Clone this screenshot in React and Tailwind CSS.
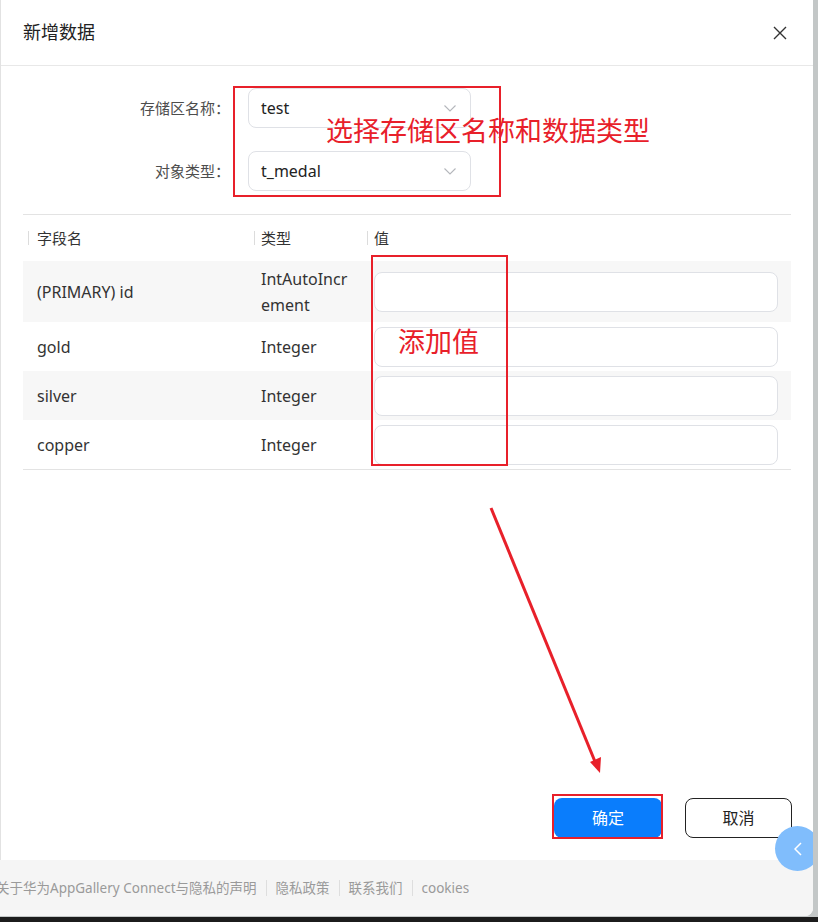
import { useState } from "react"

const font = { fontFamily: '"Noto Sans", "Noto Sans CJK SC", sans-serif' }

const rows = [
    { name: "(PRIMARY) id", type: "IntAutoIncrement", gray: true },
    { name: "gold", type: "Integer", gray: false },
    { name: "silver", type: "Integer", gray: true },
    { name: "copper", type: "Integer", gray: false },
]

function Chevron() {
    return (
        <svg width="12" height="7" viewBox="0 0 12 7" fill="none">
            <polyline points="0.5,0.5 6,6 11.5,0.5" stroke="#b4b6bb" strokeWidth="1.1" />
        </svg>
    )
}

function SelectBox({ value }) {
    return (
        <div className="flex h-10 w-[223px] items-center justify-between rounded-lg border border-[#dfe1e6] bg-white pl-[12px] pr-[14px]">
            <span className="text-[16px] text-[#222]">{value}</span>
            <Chevron />
        </div>
    )
}

function HeaderCell({ label, sep }) {
    return (
        <div className="flex items-center">
            <span className={`h-[14px] w-px bg-[#dcdcdc] ${sep}`} />
            <span className="text-[15px] text-[#333]">{label}</span>
        </div>
    )
}

export default function App() {
    const [values, setValues] = useState(["", "", "", ""])

    return (
        <div className="flex h-[922px] w-[818px] flex-col bg-[#1c1c1c]" style={font}>
            <div className="flex h-[917px] bg-[#c3c7c7]">
                <div className="relative flex h-[916px] w-[813px] flex-col overflow-hidden rounded-br-[8px] bg-white">
                    <div className="flex flex-1 flex-col border-l border-[#e2e2e2]">
                        {/* header */}
                        <div className="flex h-[66px] shrink-0 items-center justify-between border-b border-[#e8e8e8] pl-[22px] pr-[26px]">
                            <h1 className="text-[18px] text-[#222]">新增数据</h1>
                            <svg width="14" height="14" viewBox="0 0 14 14">
                                <path d="M1 1 L13 13 M13 1 L1 13" stroke="#333" strokeWidth="1.4" />
                            </svg>
                        </div>

                        {/* form */}
                        <div className="flex flex-col gap-[23px] pt-[22px]">
                            <div className="flex items-center gap-[18px]">
                                <label className="w-[229px] text-right text-[15px] text-[#4d4d4d]">存储区名称：</label>
                                <SelectBox value="test" />
                            </div>
                            <div className="flex items-center gap-[18px]">
                                <label className="w-[229px] text-right text-[15px] text-[#4d4d4d]">对象类型：</label>
                                <SelectBox value="t_medal" />
                            </div>
                        </div>

                        <div className="mx-[22px] mt-[23px] h-px bg-[#e3e3e3]" />

                        {/* table */}
                        <div className="mx-[22px] border-b border-[#e3e3e3]">
                            <div className="grid h-[46px] grid-cols-[231px_113px_1fr]">
                                <HeaderCell label="字段名" sep="ml-[5px] mr-[8px]" />
                                <HeaderCell label="类型" sep="mr-[6px]" />
                                <HeaderCell label="值" sep="mr-[6px]" />
                            </div>
                            {rows.map((row, i) => (
                                <div
                                    key={row.name}
                                    className={`grid grid-cols-[231px_113px_1fr] items-center py-[4.5px] text-[16px] leading-[26px] text-[#333] ${row.gray ? "bg-[#f7f7f7]" : "bg-white"}`}
                                >
                                    <div className="pl-[14px]">{row.name}</div>
                                    <div className="break-all pl-[7px] pr-[16px]">{row.type}</div>
                                    <div className="pl-[7px] pr-[13px]">
                                        <input
                                            className="h-10 w-full rounded-lg border border-[#dfe1e6] bg-white px-3 outline-none"
                                            value={values[i]}
                                            onChange={(e) => {
                                                const next = [...values]
                                                next[i] = e.target.value
                                                setValues(next)
                                            }}
                                        />
                                    </div>
                                </div>
                            ))}
                        </div>

                        {/* actions */}
                        <div className="flex flex-1 items-end justify-end gap-[23px] pb-[22px] pr-[21px]">
                            <button className="h-10 w-[108px] rounded-lg bg-[#0a7dfc] text-[16px] text-white">确定</button>
                            <button className="h-10 w-[107px] rounded-lg border border-[#222] bg-white text-[16px] text-[#222]">取消</button>
                        </div>
                    </div>

                    {/* footer */}
                    <div className="flex h-[56px] shrink-0 items-center bg-[#f5f5f5] text-[13.5px] text-[#9a9a9a]">
                        <span className="ml-[-4px] whitespace-nowrap">关于华为AppGallery Connect与隐私的声明</span>
                        <span className="mx-[9px] h-[16px] w-px bg-[#dedede]" />
                        <span>隐私政策</span>
                        <span className="mx-[9px] h-[16px] w-px bg-[#dedede]" />
                        <span>联系我们</span>
                        <span className="mx-[9px] h-[16px] w-px bg-[#dedede]" />
                        <span>cookies</span>
                    </div>

                    {/* floating side button */}
                    <div className="absolute left-[775px] top-[826px] flex h-[45px] w-[45px] items-center rounded-full bg-[#80bdfc] pl-[19px]">
                        <svg width="8" height="14" viewBox="0 0 8 14" fill="none">
                            <polyline points="7,1 1,7 7,13" stroke="white" strokeWidth="1.5" />
                        </svg>
                    </div>

                    {/* annotations */}
                    <div className="pointer-events-none absolute left-[233px] top-[86px] h-[111px] w-[268px] border-2 border-[#e8202a]" />
                    <span className="pointer-events-none absolute left-[326px] top-[112px] text-[27px] leading-[38px] text-[#e8202a]">选择存储区名称和数据类型</span>
                    <div className="pointer-events-none absolute left-[371px] top-[255px] h-[211px] w-[137px] border-2 border-[#e8202a]" />
                    <span className="pointer-events-none absolute left-[398px] top-[323px] text-[27px] leading-[38px] text-[#e8202a]">添加值</span>
                    <div className="pointer-events-none absolute left-[552px] top-[794px] h-[45px] w-[111px] border-2 border-[#e8202a]" />
                    <svg className="pointer-events-none absolute left-0 top-0" width="813" height="916">
                        <line x1="491" y1="508" x2="596" y2="764" stroke="#e8202a" strokeWidth="3" />
                        <polygon points="600,773 590,762 601,757" fill="#e8202a" />
                    </svg>
                </div>
                <div className="flex-1" />
            </div>
        </div>
    )
}
